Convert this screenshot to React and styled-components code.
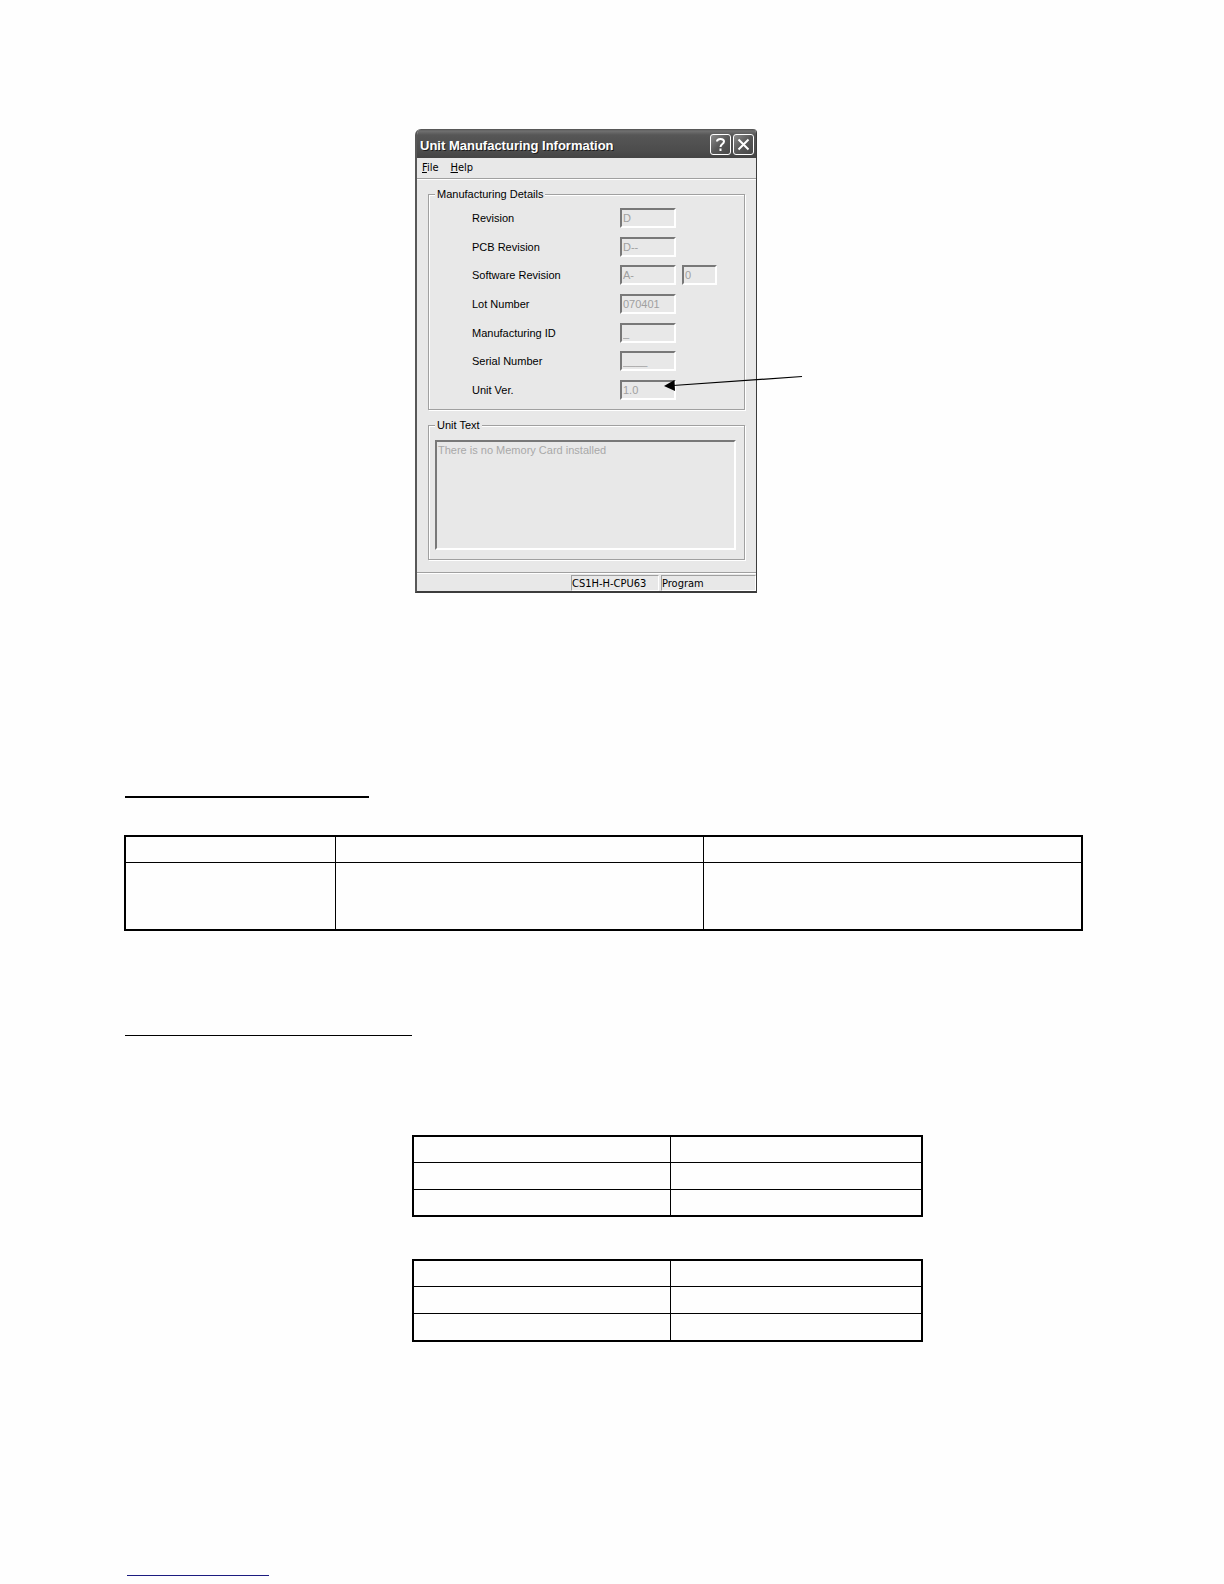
import React from 'react';
import styled, { createGlobalStyle } from 'styled-components';

const GlobalStyle = createGlobalStyle`
* {
box-sizing: border-box;
}
body {
margin: 0;
background: #fefefe;
color: #000;
font-family: "Liberation Sans", Arial, sans-serif;
font-size: 11px;
line-height: 14px;
}`

const Page = styled.main`
display: flex;
flex-direction: column;
padding: 129px 141px 8px 124px;`

const Figure = styled.div`
position: relative;
width: 342px;
margin-left: 291px;`

const Window = styled.section`
display: flex;
flex-direction: column;
background: #e8e8e8;
border: solid #3c3c3c;
border-width: 0 1px 2px 2px;
border-left-color: #585858;
border-radius: 6px 4px 0 0;
overflow: hidden;`

const TitleBar = styled.header`
display: flex;
align-items: center;
gap: 2px;
height: 29px;
padding: 2px 2px 0 4px;
margin-left: -1px;
background: linear-gradient(#505050, #707070 2px, #565656 6px, #4c4c4c 22px, #444);`

const Title = styled.h1`
flex: 1;
margin: 0;
color: #fff;
font-size: 13px;
line-height: 18px;
padding-top: 2px;
white-space: nowrap;
text-shadow: 1px 1px 0 #1c1c1c;`

const TitleButton = styled.button`
display: flex;
width: 21px;
height: 21px;
padding: 0;
border: 1px solid #fff;
border-radius: 3px;
background: linear-gradient(135deg, #8c8c8c, #585858 50%, #484848);`

const MenuBar = styled.nav`
display: flex;
align-items: flex-start;
gap: 12px;
height: 22px;
padding: 3px 5px;
border-bottom: 1px solid #fff;
box-shadow: inset 0 -1px 0 #a0a0a0;`

const MenuItem = styled.button`
padding: 0;
border: 0;
background: none;
color: #000;
font: 11px/14px "DejaVu Sans Condensed", sans-serif;`

const Content = styled.div`
display: flex;
flex-direction: column;
gap: 8px;
padding: 7px 11px 12px;`

const Group = styled.fieldset`
min-width: 0;
margin: 0;
padding: ${props => props.$padding};
border: 1px solid #a0a0a0;
box-shadow: 1px 1px 0 #fff, inset 1px 1px 0 #fff;`

const Legend = styled.legend`
margin-left: ${props => props.$indent};
padding: 0 2px;
background: #e8e8e8;`

const Fields = styled.div`
display: flex;
flex-direction: column;
justify-content: space-between;
height: 192px;`

const Field = styled.div`
display: flex;
align-items: center;`

const Label = styled.label`
width: 148px;`

const Input = styled.input`
width: ${props => props.$small ? '35px' : '56px'};
height: 20px;
margin-right: 6px;
padding: 0 1px;
border: 2px solid;
border-color: #787878 #fff #fff #787878;
background: #e8e8e8;
color: #a0a0a0;
font: inherit;`

const UnitText = styled.textarea`
display: block;
width: 100%;
height: 110px;
padding: 1px;
border: 2px solid;
border-color: #787878 #fff #fff #787878;
background: #e8e8e8;
color: #a8a8a8;
font: inherit;
resize: none;`

const StatusBar = styled.footer`
display: flex;
justify-content: flex-end;
gap: 2px;
height: 19px;
padding: 2px 0 0;
border-top: 1px solid #a0a0a0;
box-shadow: inset 0 1px 0 #fff;`

const Status = styled.div`
width: ${props => props.$width};
border: 1px solid;
border-color: #a0a0a0 #fff #fff #a0a0a0;
font: 11px/16px "DejaVu Sans Condensed", sans-serif;
white-space: nowrap;`

const Arrow = styled.svg`
position: absolute;
left: 248px;
top: 246px;`

const Rule = styled.div`
width: ${props => props.$width};
margin: ${props => props.$margin};
border-top: ${props => props.$line || '1px solid #000'};`

const Table = styled.table`
width: 100%;
max-width: ${props => props.$max || 'none'};
margin: ${props => props.$margin};
table-layout: fixed;
border: 2px solid #000;
border-collapse: separate;
border-spacing: 0;
td {
padding: 0;
border: solid #000;
border-width: 0 1px 1px 0;
}
td:last-child {
border-right: 0;
}
tr:last-child td {
border-bottom: 0;
}`

const Column = styled.col`
width: ${props => props.$width};`

const Row = styled.tr`
height: ${props => props.$height};`

const fields = [
    { id: 'revision', label: 'Revision', value: 'D' },
    { id: 'pcb', label: 'PCB Revision', value: 'D--' },
    { id: 'software', label: 'Software Revision', value: 'A-', extra: '0' },
    { id: 'lot', label: 'Lot Number', value: '070401' },
    { id: 'manufacturing', label: 'Manufacturing ID', value: '_' },
    { id: 'serial', label: 'Serial Number', value: '____' },
    { id: 'version', label: 'Unit Ver.', value: '1.0' },
];

const Grid = ({ columns, rows, $margin, $max }) => (
    <Table $margin={$margin} $max={$max}>
        <colgroup>
            {columns.map((width, id) => <Column key={id} $width={width} />)}
        </colgroup>
        <tbody>
            {rows.map((height, id) => (
                <Row key={id} $height={height}>
                    {columns.map((_, cell) => <td key={cell} />)}
                </Row>
            ))}
        </tbody>
    </Table>
)

const UnitWindow = () => (
    <Window>
        <TitleBar>
            <Title>Unit Manufacturing Information</Title>
            <TitleButton aria-label="Help">
                <svg width="19" height="19" fill="none" stroke="#fff" strokeWidth="2">
                    <path d="M6 6.5C6 3 13 3 13 6.5C13 9 9.5 9 9.5 12M9.5 13.5V16" />
                </svg>
            </TitleButton>
            <TitleButton aria-label="Close">
                <svg width="19" height="19" fill="none" stroke="#fff" strokeWidth="2">
                    <path d="M4.5 4.5L14.5 14.5M14.5 4.5L4.5 14.5" />
                </svg>
            </TitleButton>
        </TitleBar>
        <MenuBar>
            <MenuItem><u>F</u>ile</MenuItem>
            <MenuItem><u>H</u>elp</MenuItem>
        </MenuBar>
        <Content>
            <Group $padding="7px 8px 9px 43px">
                <Legend $indent="-37px">Manufacturing Details</Legend>
                <Fields>
                    {fields.map(item => (
                        <Field key={item.id}>
                            <Label htmlFor={item.id}>{item.label}</Label>
                            <Input id={item.id} value={item.value} disabled readOnly />
                            {item.extra
                                ? <Input $small aria-label={item.label} value={item.extra} disabled readOnly />
                                : null}
                        </Field>
                    ))}
                </Fields>
            </Group>
            <Group $padding="8px 8px 9px 6px">
                <Legend id="unit-text" $indent="0">Unit Text</Legend>
                <UnitText aria-labelledby="unit-text" value="There is no Memory Card installed" disabled readOnly />
            </Group>
        </Content>
        <StatusBar>
            <Status $width="88px">CS1H-H-CPU63</Status>
            <Status $width="95px">Program</Status>
        </StatusBar>
    </Window>
)

export default () => (
    <Page>
        <GlobalStyle />
        <Figure>
            <UnitWindow />
            <Arrow width="140" height="18" aria-hidden="true">
                <path d="M10 10.5L139 1.5" stroke="#000" strokeWidth="1.2" />
                <path d="M1 11L11.5 5L12 16Z" />
            </Arrow>
        </Figure>
        <Rule $width="244px" $margin="203px 0 0 1px" $line="2px solid #000" />
        <Grid $margin="37px 0 0" columns={['210px', '368px', 'auto']} rows={['26px', '66px']} />
        <Rule $width="287px" $margin="104px 0 0 1px" />
        <Grid $margin="99px 0 0 288px" $max="511px" columns={['257px', 'auto']} rows={['26px', '27px', '25px']} />
        <Grid $margin="42px 0 0 288px" $max="511px" columns={['257px', 'auto']} rows={['26px', '27px', '26px']} />
        <Rule $width="142px" $margin="233px 0 0 3px" $line="1px solid #1c1c80" />
    </Page>
)
